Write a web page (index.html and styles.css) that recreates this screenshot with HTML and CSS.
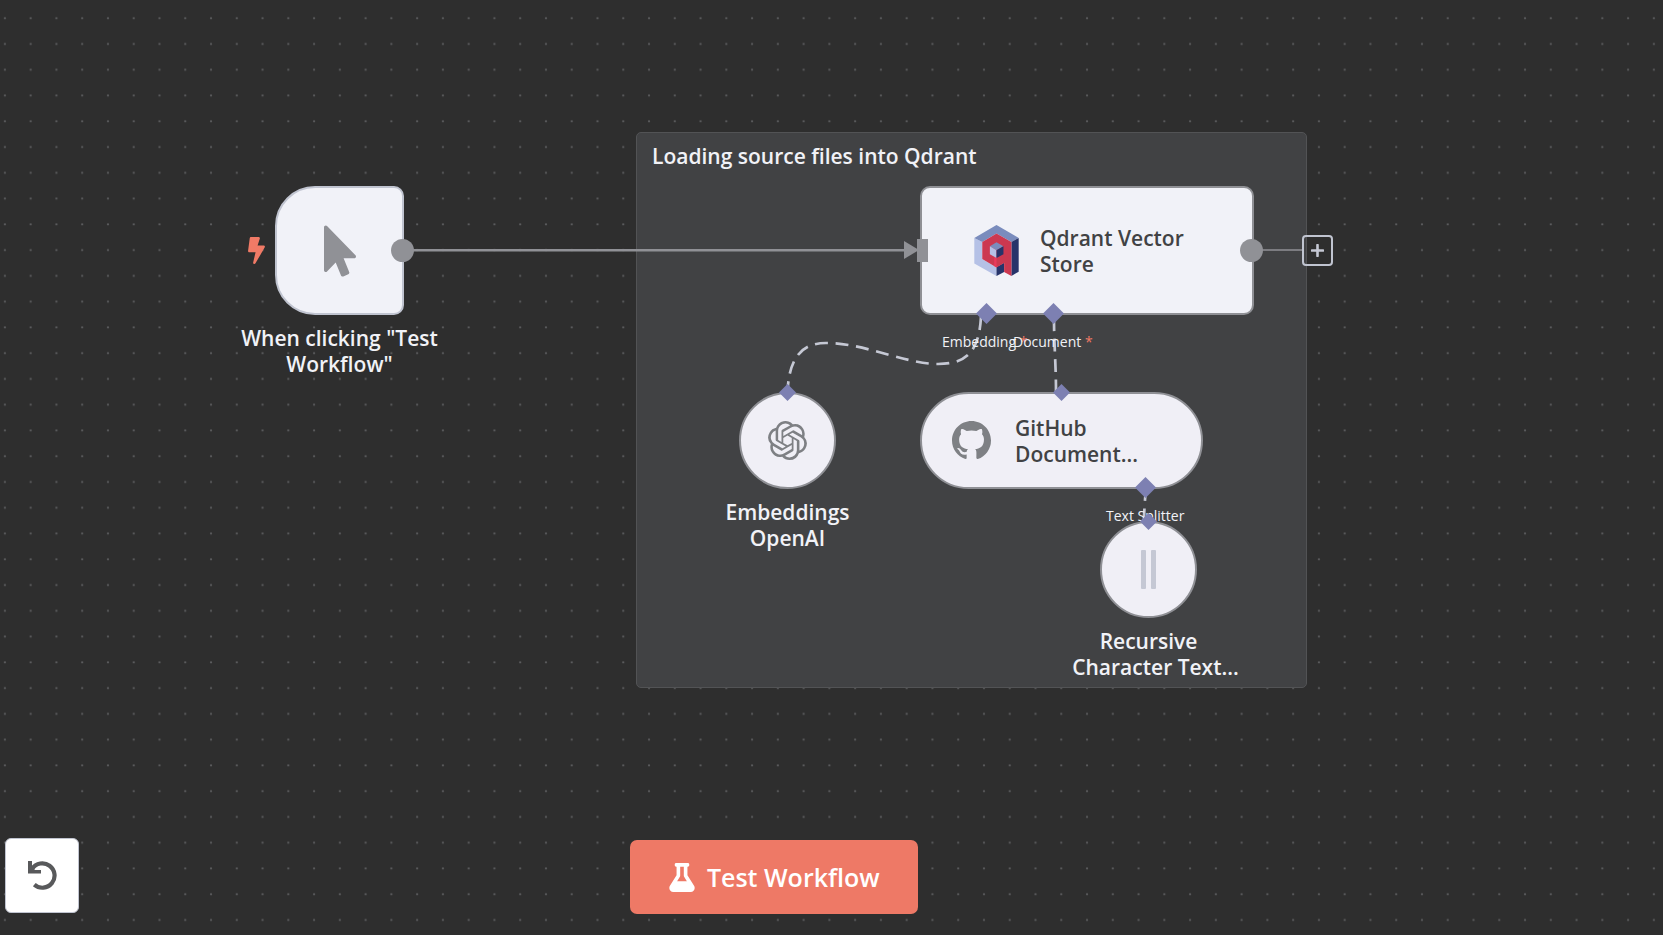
FILE: index.html
```
<!DOCTYPE html>
<html lang="en">
<head>
<meta charset="utf-8">
<title>Workflow</title>
<link rel="stylesheet" href="styles.css">
</head>
<body>
<main class="canvas">
  <svg class="grid" aria-hidden="true">
    <defs>
      <pattern id="dots" x="-8" y="5" width="25.765" height="25.765" patternUnits="userSpaceOnUse">
        <circle cx="12.9" cy="13.2" r="1.1" fill="#5c5d5f"/>
      </pattern>
    </defs>
    <rect width="100%" height="100%" fill="url(#dots)"/>
  </svg>

  <section class="sticky">
    <h2 class="sticky-title">Loading source files into Qdrant</h2>
  </section>

  <svg class="edges" aria-hidden="true">
    <path class="edge" d="M403 250.300H906"/>
    <path class="arrow" d="M904 241L919 250L904 259Z"/>
    <path class="edge edge-thin" d="M1251 250H1303"/>
    <path class="edge-dashed" d="M981 317C979 350 968 364 938 364C905 364 865 343 826 343C800 343 789 360 787.500 392"/>
    <path class="edge-dashed" d="M1054 318C1054 345 1056 365 1056 392"/>
    <path class="edge-dashed" d="M1146 488C1145 500 1144 510 1144 524"/>
  </svg>

  <article class="node node-trigger">
    <svg class="bolt" viewBox="0 0 320 512" aria-hidden="true"><path fill="#f07a66" d="M296 160H180.600l42.600-129.800C227.200 15 215.700 0 200 0H56C44 0 33.800 8.900 32.200 20.800l-32 240C-1.700 275.200 9.500 288 24 288h118.700L96.600 482.500c-3.600 15.200 8 29.500 23.300 29.500 8.400 0 16.400-4.400 20.800-12l176-304c9.300-15.900-2.200-36-20.700-36z"/></svg>
    <div class="shape shape-trigger">
      <svg class="pointer" viewBox="0 0 320 512" aria-hidden="true"><path fill="#909196" d="M302.189 329.126H196.105l55.831 135.993c3.889 9.428-.555 19.999-9.444 23.999l-49.165 21.427c-9.165 4-19.443-.571-23.332-9.714l-53.053-129.136-86.664 89.138C18.729 472.710 0 463.554 0 447.977V18.299C0 1.899 19.921-6.096 30.277 5.443l284.412 292.542c11.472 11.179 3.007 31.141-12.500 31.141z"/></svg>
    </div>
    <p class="caption">When clicking "Test<br>Workflow"</p>
    <span class="port port-out"></span>
  </article>

  <article class="node node-qdrant">
    <div class="shape shape-wide">
      <svg class="qdrant" viewBox="0 0 134 154" aria-hidden="true">
        <path fill="#b5c1e6" d="M0 39L24 51V103L67 128V154L0 116Z"/>
        <path fill="#7a8cbd" d="M67 0L134 39L112 51L67 26L24 51L0 39Z"/>
        <path fill="#27346a" d="M134 39V141L112 154V51Z"/>
        <path fill="#27346a" d="M67 127L90 114V142L67 154Z"/>
        <path fill="#cc3850" d="M67 26L112 51V154L90 142V115L67 128L24 103V51Z"/>
        <path fill="#e83a5c" d="M60 96L67 100V128L60 124Z"/>
        <path fill="#7a8cbd" d="M67 52L88 64L67 76L47 64Z"/>
        <path fill="#b5c1e6" d="M47 64L67 76V100L47 88Z"/>
        <path fill="#27346a" d="M88 64V88L67 100V76Z"/>
      </svg>
      <p class="name">Qdrant Vector<br>Store</p>
    </div>
    <span class="port-in"></span>
    <span class="port port-out"></span>
    <svg class="diamond diamond-embedding" viewBox="0 0 20 20" aria-hidden="true"><path d="M10 0L20 10L10 20L0 10Z"/></svg>
    <svg class="diamond diamond-document" viewBox="0 0 20 20" aria-hidden="true"><path d="M10 0L20 10L10 20L0 10Z"/></svg>
    <span class="port-label label-embedding">Embedding <b class="required">*</b></span>
    <span class="port-label label-document">Document <b class="required">*</b></span>
  </article>

  <button class="add" type="button" aria-label="Add node">
    <svg class="plus" viewBox="0 0 13 13" aria-hidden="true"><path d="M6.500 1V12M1 6.500H12"/></svg>
  </button>

  <article class="node node-openai">
    <div class="shape shape-round">
      <svg class="sub-icon" viewBox="0 0 24 24" aria-hidden="true"><path fill="#7e8084" d="M22.2819 9.8211a5.9847 5.9847 0 0 0-.5157-4.9108 6.0462 6.0462 0 0 0-6.5098-2.9A6.0651 6.0651 0 0 0 4.9807 4.1818a5.9847 5.9847 0 0 0-3.9977 2.9 6.0462 6.0462 0 0 0 .7427 7.0966 5.98 5.98 0 0 0 .511 4.9107 6.051 6.051 0 0 0 6.5146 2.9001A5.9847 5.9847 0 0 0 13.2599 24a6.0557 6.0557 0 0 0 5.7718-4.2058 5.9894 5.9894 0 0 0 3.9977-2.9001 6.0557 6.0557 0 0 0-.7475-7.0729zm-9.022 12.6081a4.4755 4.4755 0 0 1-2.8764-1.0408l.1419-.0804 4.7783-2.7582a.7948.7948 0 0 0 .3927-.6813v-6.7369l2.02 1.1686a.071.071 0 0 1 .038.052v5.5826a4.504 4.504 0 0 1-4.4945 4.4944zm-9.6607-4.1254a4.4708 4.4708 0 0 1-.5346-3.0137l.142.0852 4.783 2.7582a.7712.7712 0 0 0 .7806 0l5.8428-3.3685v2.3324a.0804.0804 0 0 1-.0332.0615L9.74 19.9502a4.4992 4.4992 0 0 1-6.1408-1.6464zM2.3408 7.8956a4.485 4.485 0 0 1 2.3655-1.9728V11.6a.7664.7664 0 0 0 .3879.6765l5.8144 3.3543-2.0201 1.1685a.0757.0757 0 0 1-.071 0l-4.8303-2.7865A4.504 4.504 0 0 1 2.3408 7.872zm16.5963 3.8558L13.1038 8.364 15.1192 7.2a.0757.0757 0 0 1 .071 0l4.8303 2.7913a4.4944 4.4944 0 0 1-.6765 8.1042v-5.6772a.79.79 0 0 0-.407-.667zm2.0107-3.0231l-.142-.0852-4.7735-2.7818a.7759.7759 0 0 0-.7854 0L9.409 9.2297V6.8974a.0662.0662 0 0 1 .0284-.0615l4.8303-2.7866a4.4992 4.4992 0 0 1 6.6802 4.66zM8.3065 12.863l-2.02-1.1638a.0804.0804 0 0 1-.038-.0567V6.0742a4.4992 4.4992 0 0 1 7.3757-3.4537l-.142.0805L8.704 5.459a.7948.7948 0 0 0-.3927.6813zm1.0976-2.3654l2.602-1.4998 2.6069 1.4998v2.9994l-2.5974 1.4997-2.6067-1.4997Z"/></svg>
    </div>
    <p class="caption">Embeddings<br>OpenAI</p>
    <svg class="diamond diamond-top" viewBox="0 0 20 20" aria-hidden="true"><path d="M10 0L20 10L10 20L0 10Z"/></svg>
  </article>

  <article class="node node-github">
    <div class="shape shape-pill">
      <svg class="sub-icon" viewBox="0 0 16 16" aria-hidden="true"><path fill="#7e8084" d="M8 0C3.580 0 0 3.580 0 8c0 3.540 2.290 6.530 5.470 7.590.4.070.55-.17.55-.38 0-.19-.01-.82-.01-1.490-2.010.37-2.530-.49-2.690-.94-.09-.23-.48-.94-.82-1.130-.28-.15-.68-.52-.01-.53.63-.01 1.080.58 1.230.82.72 1.210 1.870.87 2.330.66.070-.52.28-.87.51-1.070-1.780-.2-3.640-.89-3.640-3.950 0-.87.31-1.590.82-2.150-.08-.2-.36-1.020.08-2.120 0 0 .67-.21 2.200.82.64-.18 1.320-.27 2-.27s1.360.09 2 .27c1.530-1.040 2.200-.82 2.200-.82.44 1.100.16 1.920.08 2.120.51.56.82 1.270.82 2.150 0 3.070-1.870 3.750-3.650 3.950.29.25.54.73.54 1.480 0 1.070-.01 1.930-.01 2.200 0 .21.15.46.55.38A8.010 8.010 0 0 0 16 8c0-4.420-3.580-8-8-8z"/></svg>
      <p class="name">GitHub<br>Document...</p>
    </div>
    <svg class="diamond diamond-top" viewBox="0 0 20 20" aria-hidden="true"><path d="M10 0L20 10L10 20L0 10Z"/></svg>
    <svg class="diamond diamond-splitter" viewBox="0 0 20 20" aria-hidden="true"><path d="M10 0L20 10L10 20L0 10Z"/></svg>
    <span class="port-label label-splitter">Text Splitter</span>
  </article>

  <article class="node node-recursive">
    <div class="shape shape-round">
      <svg class="sub-icon" viewBox="0 0 39 39" aria-hidden="true"><path fill="#c5c8d4" d="M13 0h3q1 0 1 1v37q0 1-1 1h-3q-1 0-1-1V1q0-1 1-1zM23 0h3q1 0 1 1v37q0 1-1 1h-3q-1 0-1-1V1q0-1 1-1z"/></svg>
    </div>
    <p class="caption">Recursive<br>Character Text<span class="ellipsis">...</span></p>
    <svg class="diamond diamond-top" viewBox="0 0 20 20" aria-hidden="true"><path d="M10 0L20 10L10 20L0 10Z"/></svg>
  </article>

  <footer class="controls">
    <button class="reset" type="button" aria-label="Reset zoom">
      <svg class="reset-icon" viewBox="0 0 29 29" aria-hidden="true">
        <path fill="none" stroke="#58595b" stroke-width="4.200" d="M4.200 7.800A12.200 12.200 0 1 1 6.300 23.700"/>
        <path fill="#58595b" d="M0 0H4V6L7 9H13V12.500H0Z"/>
      </svg>
    </button>
    <button class="run" type="button">
      <svg class="flask" viewBox="0 0 448 512" aria-hidden="true"><path fill="#fff" d="M437.200 403.500L320 215V64h8c13.300 0 24-10.700 24-24V24c0-13.300-10.700-24-24-24H120c-13.300 0-24 10.700-24 24v16c0 13.300 10.700 24 24 24h8v151L10.800 403.500C-18.500 450.600 15.300 512 70.900 512h306.200c55.700 0 89.400-61.500 60.100-108.500zM137.900 320l48.200-77.600c3.700-5.200 5.800-11.600 5.800-18.400V64h64v160c0 6.900 2.200 13.200 5.800 18.400l48.200 77.600h-172z"/></svg>
      Test Workflow
    </button>
  </footer>
</main>
</body>
</html>
```
FILE: styles.css
```
* {
  box-sizing: border-box;
}

body {
  margin: 0;
  background: #2e2e2e;
  color: #f1f2f7;
  font-family: "Open Sans", "Noto Sans", sans-serif;
  font-size: 21px;
  font-weight: 600;
  line-height: 26px;
}

p,
h2 {
  margin: 0;
}

button {
  margin: 0;
  padding: 0;
  font: inherit;
  cursor: pointer;
}

.canvas {
  position: relative;
  min-height: 100vh;
  overflow: hidden;
}

.grid,
.edges {
  position: absolute;
  inset: 0;
  width: 100%;
  height: 100%;
}

.sticky {
  position: absolute;
  left: 636px;
  top: 132px;
  width: 671px;
  height: 556px;
  padding: 10px 15px;
  border: 1px solid #525355;
  border-radius: 5px;
  background: #414244;
}

.sticky-title {
  font-size: 21px;
  font-weight: 600;
}

.edge {
  fill: none;
  stroke: #909196;
  stroke-width: 2.600;
}

.edge-thin {
  stroke-width: 1.400;
}

.arrow {
  fill: #909196;
}

.edge-dashed {
  fill: none;
  stroke: #c5c8d4;
  stroke-width: 2.700;
  stroke-dasharray: 12.900 7.700;
}

.node {
  position: absolute;
}

.node-trigger {
  left: 275px;
  top: 186px;
}

.node-qdrant {
  left: 920px;
  top: 186px;
}

.node-openai {
  left: 739px;
  top: 392px;
}

.node-github {
  left: 920px;
  top: 392px;
}

.node-recursive {
  left: 1100px;
  top: 521px;
}

.shape {
  display: flex;
  align-items: center;
  border: 2px solid #8f9095;
  background: #f1f2f8;
  color: #414244;
}

.shape-trigger {
  justify-content: center;
  width: 129px;
  height: 129px;
  border-color: #c0c4d0;
  border-radius: 40px 10px 10px 40px;
}

.shape-wide {
  gap: 21px;
  width: 334px;
  height: 129px;
  padding-left: 52px;
  border-radius: 10px;
}

.shape-round {
  justify-content: center;
  width: 97px;
  height: 97px;
  border-radius: 50%;
  background: #f0eff6;
}

.shape-pill {
  gap: 24px;
  width: 283px;
  height: 97px;
  padding-left: 30px;
  border-radius: 49px;
  background: #f0eff6;
}

.caption {
  width: 173px;
  margin: 10px -38px 0;
  text-align: center;
  white-space: nowrap;
}

.node-trigger .caption {
  width: 209px;
  margin: 10px -40px 0;
}

.ellipsis {
  margin-right: -14px;
}

.bolt {
  position: absolute;
  left: -27px;
  top: 51px;
  width: 17px;
  height: 27px;
}

.pointer {
  width: 32px;
  height: 52px;
}

.qdrant {
  width: 45px;
  height: 51px;
}

.sub-icon {
  width: 39px;
  height: 39px;
}

.port {
  position: absolute;
  right: -9px;
  top: 53px;
  width: 23px;
  height: 23px;
  border-radius: 50%;
  background: #909196;
}

.node-trigger .port {
  left: 116px;
}

.port-in {
  position: absolute;
  left: -3px;
  top: 53px;
  width: 11px;
  height: 23px;
  background: #909196;
}

.diamond {
  position: absolute;
  width: 21px;
  height: 21px;
  fill: #7d80b2;
}

.diamond-top {
  left: 40px;
  top: -8px;
  width: 17px;
  height: 17px;
}

.node-github .diamond-top {
  left: 133px;
}

.diamond-embedding {
  left: 56px;
  top: 117px;
}

.diamond-document {
  left: 123px;
  top: 117px;
}

.diamond-splitter {
  left: 215px;
  top: 85px;
}

.port-label {
  position: absolute;
  font-size: 14px;
  font-weight: 400;
  line-height: 20px;
  white-space: nowrap;
}

.label-embedding {
  left: 22px;
  top: 146px;
}

.label-document {
  left: 93px;
  top: 146px;
}

.label-splitter {
  left: 186px;
  top: 114px;
}

.required {
  color: #f07a66;
  font-weight: 400;
}

.add {
  position: absolute;
  left: 1302px;
  top: 235px;
  display: grid;
  place-items: center;
  width: 31px;
  height: 31px;
  border: 2px solid #c0c4d0;
  border-radius: 4px;
  background: none;
}

.plus {
  width: 13px;
  height: 13px;
  fill: none;
  stroke: #c5c8d4;
  stroke-width: 2.600;
  stroke-linecap: round;
}

.controls {
  position: absolute;
  left: 5px;
  right: 0;
  bottom: 21px;
  display: flex;
  align-items: flex-start;
  gap: 33.25%;
}

.reset {
  display: grid;
  place-items: center;
  width: 74px;
  height: 75px;
  border: 1px solid #c0c4d0;
  border-radius: 6px;
  background: #fff;
}

.reset-icon {
  width: 29px;
  height: 29px;
}

.run {
  display: flex;
  align-items: center;
  justify-content: center;
  gap: 12px;
  width: 288px;
  height: 74px;
  margin-top: 2px;
  border: 0;
  border-radius: 7px;
  background: #ee7966;
  color: #fff;
  font-size: 25px;
  font-weight: 600;
}

.flask {
  width: 26px;
  height: 29px;
}
```
